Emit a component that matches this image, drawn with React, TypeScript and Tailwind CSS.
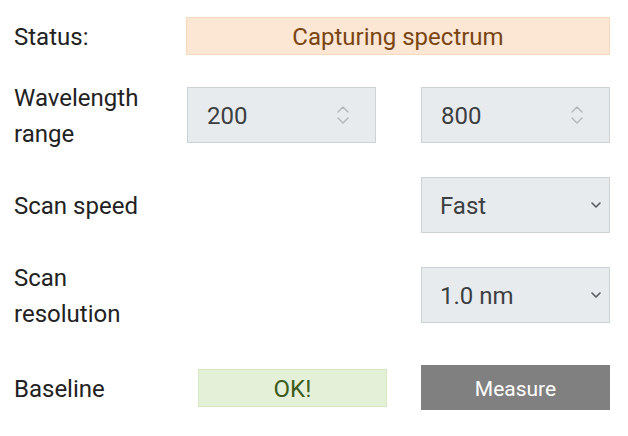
import React from 'react'

const Spinner = () => (
    <svg width="12" height="18" viewBox="0 0 12 18" fill="none" stroke="#b4b9be" strokeWidth="1.5" strokeLinecap="round" strokeLinejoin="round">
        <path d="M1 6 L6 1 L11 6" />
        <path d="M1 12 L6 17 L11 12" />
    </svg>
)

const Chevron = () => (
    <svg width="12" height="8" viewBox="0 0 12 8" fill="none" stroke="#555b61" strokeWidth="1.6" strokeLinecap="round" strokeLinejoin="round">
        <path d="M2 2 L6 6 L10 2" />
    </svg>
)

const NumberBox = ({ value }: { value: string }) => (
    <div className='w-[189px] h-[56px] bg-[#e8ebee] border border-[#cdd2d7] flex items-center justify-between pl-[19px] pr-[26px] text-[#3c3f42]'>
        <span className='pt-[3px]'>{value}</span>
        <Spinner />
    </div>
)

const SelectBox = ({ value }: { value: string }) => (
    <div className='w-[189px] h-[56px] bg-[#e8ebee] border border-[#cdd2d7] flex items-center justify-between pl-[18px] pr-[7px] text-[#3c3f42]'>
        <span className='pt-[3px]'>{value}</span>
        <Chevron />
    </div>
)

const App = () => {
    return (
        <div className="w-[628px] h-[436px] bg-white text-[24px] leading-[35px] text-[#222] flex flex-col pt-[17px] pl-[14px]" style={{ fontFamily: 'Roboto, "Liberation Sans", sans-serif' }}>
            <div className='flex items-center h-[38px]'>
                <div className='w-[172px] pt-[3px]'>Status:</div>
                <div className='w-[424px] h-[38px] pt-[3px] bg-[#fbe7d4] border border-[#f5d9bd] text-[#7a4512] flex items-center justify-center'>
                    Capturing spectrum
                </div>
            </div>
            <div className='flex items-center h-[70px] mt-[25px]'>
                <div className='w-[173px] pt-[3px] leading-[35.5px]'>Wavelength<br />range</div>
                <NumberBox value='200' />
                <div className='w-[45px]' />
                <NumberBox value='800' />
            </div>
            <div className='flex items-center h-[56px] mt-[27px]'>
                <div className='w-[407px] pt-[3px]'>Scan speed</div>
                <SelectBox value='Fast' />
            </div>
            <div className='flex items-center h-[70px] mt-[27px]'>
                <div className='w-[407px] pt-[3px] leading-[35.5px]'>Scan<br />resolution</div>
                <SelectBox value='1.0 nm' />
            </div>
            <div className='flex items-center h-[45px] mt-[35px]'>
                <div className='w-[184px] pt-[3px]'>Baseline</div>
                <div className='w-[189px] h-[38px] pt-[3px] bg-[#e5f0d8] border border-[#d5e8c2] text-[#3d5c1c] flex items-center justify-center'>
                    OK!
                </div>
                <div className='w-[34px]' />
                <button className='w-[189px] h-[45px] pt-[3px] bg-[#808080] text-white text-[21px] flex items-center justify-center'>
                    Measure
                </button>
            </div>
        </div>
    )
}

export default App
